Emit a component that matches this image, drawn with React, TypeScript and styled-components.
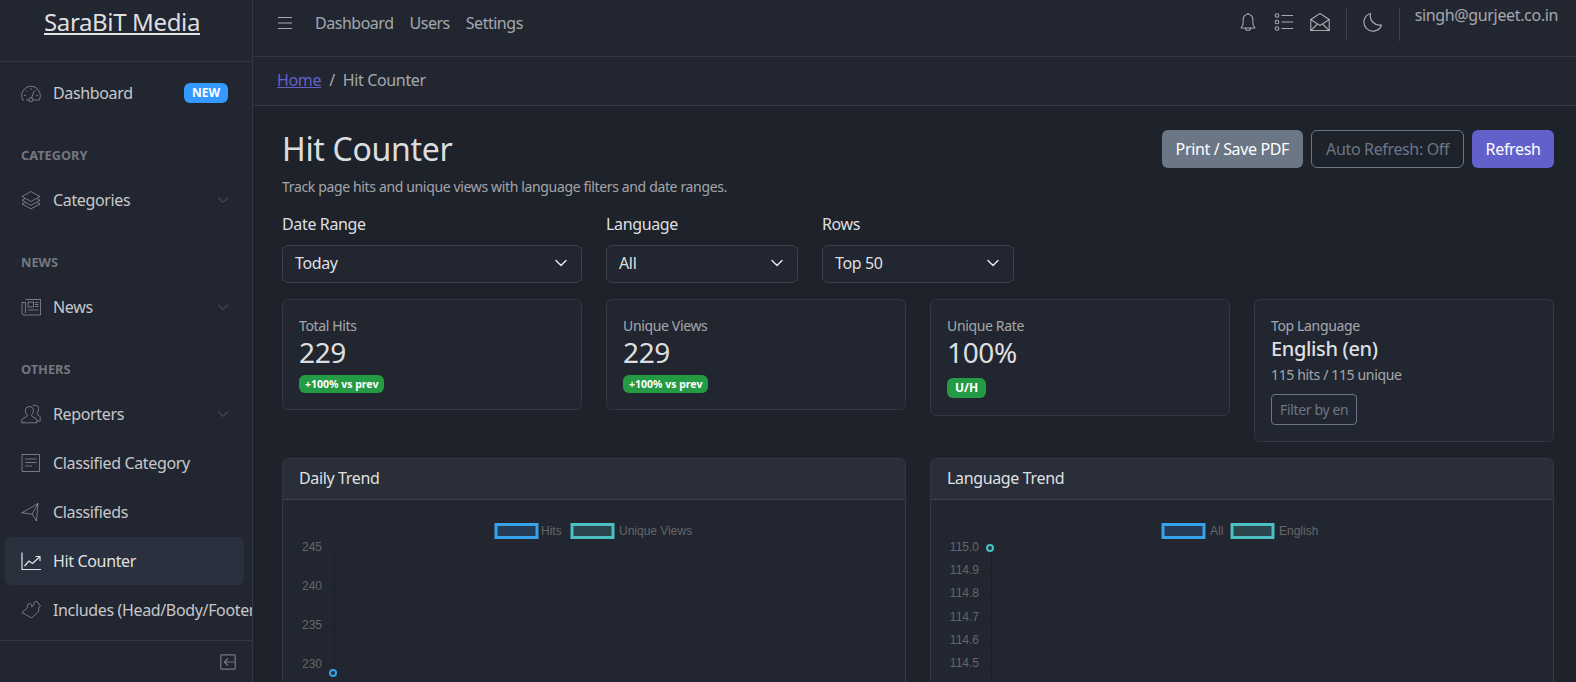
import styled, { createGlobalStyle } from 'styled-components';

const GlobalStyle = createGlobalStyle`
  html, body {
    margin: 0;
    height: 100%;
    overflow: hidden;
    background: #1d222b;
  }
  * { box-sizing: border-box; }
  body {
    font-family: "Noto Sans", sans-serif;
    font-size: 16px;
    line-height: 1.5;
    letter-spacing: -0.022em;
    color: rgba(255, 255, 255, 0.87);
  }
`;

const Icon = ({ children, size = 20 }: { children: React.ReactNode; size?: number }) => (
  <svg width={size} height={size} viewBox="0 0 20 20" fill="none" stroke="currentColor" strokeWidth="1" strokeLinejoin="round">
    {children}
  </svg>
);

const Speedometer = () => (
  <Icon>
    <path d="M3 17H1.800C1 15.500 .7 14 .7 12.500a9.300 9.300 0 0 1 18.600 0c0 1.500-.3 3-1.100 4.500H12" />
    <path d="M8 17H5" />
    <circle cx="10" cy="16.800" r="2" />
    <path d="M10.600 14.900l2.400-6.900M3 12.500h1.800M15.200 12.500H17M10 5v1.800M4.800 7.300l1.200 1.200M15.200 7.300L14 8.500" />
  </Icon>
);
const Layers = () => (
  <Icon>
    <path d="M10 1.500L1 6.500l9 5 9-5z" />
    <path d="M3.800 8.800L1 10.300l9 5 9-5-2.800-1.500" />
    <path d="M3.800 12.600L1 14l9 4.800L19 14l-2.800-1.400" />
  </Icon>
);
const Newspaper = () => (
  <Icon>
    <path d="M4.500 2.500h15v15.500H3a2 2 0 0 1-2-2V5.500h3.500V16" />
    <rect x="7" y="5" width="5.500" height="5" />
    <path d="M14 5.500h3.500M14 7.500h3.500M14 9.500h3.500M7 13h10.500" />
  </Icon>
);
const People = () => (
  <Icon>
    <path d="M.8 18.800v-2.800c0-1.600 3.800-2.600 5-3.700 .6-.8 .2-1.600-.6-2.600C4 8 4 4.800 5.600 3.500c1.500-1.200 4-1.200 5.500 0 1.600 1.300 1.600 4.500 .4 6.200-.8 1-1.200 1.800-.6 2.600 1.200 1.100 5 2.100 5 3.700v2.800z" />
    <path d="M11.500 1.800c1.500-1 3.600-.9 5 .2 1.500 1.300 1.400 4.300 .3 6-.8 1-1 1.800-.4 2.500 .8 .8 2.800 1.400 2.800 3v3.500h-3" />
  </Icon>
);
const Notes = () => (
  <Icon>
    <rect x="1" y="1.500" width="17.500" height="17" />
    <path d="M4 6h11.500M4 9.500h11.500M4 13h7" strokeWidth="1.100" />
  </Icon>
);
const Send = () => (
  <Icon>
    <path d="M17 1.500L.8 10.800l10.400 1.400 4.300 6.800z" />
    <path d="M17 1.500l-5.800 10.700" />
  </Icon>
);
const ChartLine = () => (
  <Icon>
    <path d="M1 1.500V18.500h19" strokeWidth="1.200" />
    <path d="M3.500 15l4.500-5 3.500 2.500L18.500 6" strokeWidth="1.200" />
    <path d="M14.500 5.500h4.500V10" strokeWidth="1.200" />
  </Icon>
);
const Puzzle = () => (
  <Icon>
    <path d="M1 12.500l5.500-5c-.7-1.500-.2-3.500 1.800-3.800 1.700-.2 3 1.300 2.400 3l2.300-2c-.6-1.600 .4-3.200 2-3.200 1.800 0 2.500 1.300 2.500 2.500 1.200 .3 2 1.500 1.500 2.800-.3 .8-1 1.200-1.700 1.400 .8 1.500 .6 3-.6 4.200l-5.200 4.800c-.8 .7-1.700 .7-2.400 0z" />
  </Icon>
);
const Bell = () => (
  <Icon>
    <path d="M4 14.500c.8-1 1.200-2 1.200-4V7a4.800 4.800 0 0 1 9.600 0v3.500c0 2 .4 3 1.200 4 .5 .6 .8 1 .8 1.500H3.200c0-.5 .3-.9 .8-1.500z" strokeWidth="1.100" />
    <path d="M7.500 16a2.500 2.500 0 0 0 5 0" strokeWidth="1.100" />
    <path d="M10 2V.8" strokeWidth="1.100" />
  </Icon>
);
const ListRich = () => (
  <Icon>
    <circle cx="3" cy="3.500" r="1.800" strokeWidth="1.100" />
    <circle cx="3" cy="10" r="1.800" strokeWidth="1.100" />
    <circle cx="3" cy="16.500" r="1.800" strokeWidth="1.100" />
    <path d="M7.500 3.500h11.500M7.500 10h11.500M7.500 16.500h11.500" strokeWidth="1.200" />
  </Icon>
);
const EnvelopeOpen = () => (
  <Icon>
    <path d="M.8 7.500L10 1.500l9.200 6v11H.8z" strokeWidth="1.100" />
    <path d="M.8 7.500L10 13.500l9.200-6M.8 18.500l6.700-6.500M19.200 18.500l-6.700-6.500" strokeWidth="1.100" />
  </Icon>
);
const Moon = () => (
  <Icon>
    <path d="M7.500 1.500A9 9 0 1 0 18.500 13 9.500 9.500 0 0 1 7.500 1.500z" strokeWidth="1.200" />
  </Icon>
);
const Chevron = () => (
  <Icon size={12}>
    <path d="M2 6l8 8 8-8" strokeWidth="1.400" />
  </Icon>
);
const Toggler = () => (
  <Icon size={16}>
    <rect x="1" y="1" width="18" height="18" rx="1" strokeWidth="1.500" />
    <path d="M18 10H6M10 5.500L5.500 10l4.500 4.500" strokeWidth="1.500" />
  </Icon>
);
const Hamburger = () => (
  <svg width="16" height="14" viewBox="0 0 16 14" fill="none" stroke="currentColor" strokeWidth="1.100">
    <path d="M1 1.500h14M1 7h14M1 12.500h14" />
  </svg>
);
const SelectArrow = () => (
  <svg width="16" height="16" viewBox="0 0 16 16" fill="none" stroke="currentColor" strokeWidth="1.500" strokeLinecap="round" strokeLinejoin="round">
    <path d="M3 5.500l5 5 5-5" />
  </svg>
);

const Shell = styled.div`
  display: flex;
  height: 100vh;
  overflow: hidden;
`;

const Sidebar = styled.aside`
  flex: 0 0 253px;
  display: flex;
  flex-direction: column;
  background: #212631;
  border-right: 1px solid #323743;
  overflow: hidden;
`;

const Brand = styled.div`
  flex: 0 0 62px;
  padding-right: 8px;
  border-bottom: 1px solid #323743;
  text-align: center;
`;

const BrandLink = styled.a`
  font-size: 24px;
  line-height: 43px;
  color: rgba(255, 255, 255, 0.87);
  text-decoration: underline;
`;

const SideNav = styled.nav`
  flex: 1;
  padding: 7px 8px 0 5px;
  overflow: hidden;
`;

const NavTitle = styled.div`
  margin-top: 16px;
  padding: 13px 16px 11px;
  font-size: 12.800px;
  font-weight: 700;
  line-height: 19px;
  letter-spacing: normal;
  color: rgba(255, 255, 255, 0.38);
  text-transform: uppercase;
`;

const NavItem = styled.a<{ $active?: boolean }>`
  display: flex;
  align-items: center;
  height: 48px;
  margin-bottom: 1px;
  padding: 0 16px;
  border-radius: 6px;
  white-space: nowrap;
  background: ${(p) => (p.$active ? '#2a303d' : 'transparent')};
  color: ${(p) => (p.$active ? 'rgba(255, 255, 255, 0.87)' : 'rgba(255, 255, 255, 0.75)')};
`;

const NavIcon = styled.span<{ $active?: boolean }>`
  flex: 0 0 32px;
  display: flex;
  color: ${(p) => (p.$active ? 'rgba(255, 255, 255, 0.87)' : 'rgba(255, 255, 255, 0.38)')};
`;

const NavBadge = styled.span`
  margin-left: auto;
  padding: 0 8px;
  height: 20px;
  border-radius: 6px;
  background: #3399ff;
  color: #fff;
  font-size: 12px;
  font-weight: 700;
  line-height: 20px;
  letter-spacing: normal;
`;

const NavChevron = styled.span`
  margin-left: auto;
  margin-right: -1px;
  display: flex;
  color: rgba(255, 255, 255, 0.3);
`;

const SideFooter = styled.div`
  flex: 0 0 42px;
  display: flex;
  align-items: center;
  justify-content: flex-end;
  padding-right: 16px;
  border-top: 1px solid #323743;
  color: rgba(255, 255, 255, 0.38);
`;

const Main = styled.main`
  flex: 1;
  min-width: 0;
  display: flex;
  flex-direction: column;
`;

const TopBarWrap = styled.div`
  background: #212631;
`;

const TopBar = styled.header`
  height: 56px;
  display: flex;
  align-items: flex-start;
`;

const TopLeft = styled.div`
  display: flex;
  align-items: center;
  height: 46px;
  padding-left: 24px;
  color: rgba(255, 255, 255, 0.6);
`;

const TopLink = styled.a`
  margin-right: 16px;
  letter-spacing: -0.03em;
`;

const Burger = styled.span`
  display: flex;
  margin-right: 22px;
`;

const TopRight = styled.div`
  margin-left: auto;
  display: flex;
  align-items: flex-start;
  padding-right: 18px;
  color: rgba(255, 255, 255, 0.6);
`;

const TopIcon = styled.span`
  display: flex;
  width: 36px;
  height: 44px;
  align-items: center;
  justify-content: center;
`;

const VRule = styled.span`
  width: 1px;
  height: 33px;
  margin: 8px 8px 0;
  background: #3c414c;
`;

const Email = styled.span`
  padding: 3px 0 0 7px;
`;

const HRule = styled.div`
  height: 1px;
  background: #323743;
`;

const Crumbs = styled.div`
  display: flex;
  align-items: center;
  height: 48px;
  padding: 0 0 2px 24px;
  color: rgba(255, 255, 255, 0.6);
`;

const CrumbLink = styled.a`
  color: #6261cc;
  text-decoration: underline;
`;

const CrumbSep = styled.span`
  margin: 0 8px;
`;

const Page = styled.div`
  padding: 24px 22px 0 29px;
`;

const TitleRow = styled.div`
  display: flex;
  justify-content: space-between;
  align-items: flex-start;
`;

const PageTitle = styled.h1`
  margin: 0;
  font-size: 32px;
  font-weight: 400;
  line-height: 38px;
  letter-spacing: -0.01em;
`;

const Subtitle = styled.p`
  margin: 8px 0 0;
  font-size: 14px;
  line-height: 21px;
  color: rgba(255, 255, 255, 0.6);
`;

const Actions = styled.div`
  display: flex;
  gap: 8px;
`;

const Button = styled.button<{ $variant: 'secondary' | 'outline' | 'primary' }>`
  height: 38px;
  padding: 0 ${(p) => (p.$variant === 'outline' ? '14px' : p.$variant === 'primary' ? '12.500px' : '13px')} 1px;
  border-radius: 6px;
  font: inherit;
  letter-spacing: inherit;
  border: 1px solid ${(p) => (p.$variant === 'outline' ? '#6b7785' : 'transparent')};
  background: ${(p) => (p.$variant === 'secondary' ? '#6b7785' : p.$variant === 'primary' ? '#6261cc' : 'transparent')};
  color: ${(p) => (p.$variant === 'outline' ? '#6b7785' : '#fff')};
`;

const Filters = styled.div`
  display: flex;
  gap: 24px;
  margin-top: 15px;
`;

const Field = styled.div<{ $width: number }>`
  width: ${(p) => p.$width}px;
`;

const FieldLabel = styled.div`
  margin-bottom: 9px;
`;

const Select = styled.div`
  display: flex;
  align-items: center;
  justify-content: space-between;
  height: 38px;
  padding: 0 12px 2px;
  border: 1px solid #3c414c;
  border-radius: 6px;
  background: #212631;
`;

const StatsRow = styled.div`
  display: grid;
  grid-template-columns: repeat(4, 1fr);
  gap: 24px;
  align-items: start;
  margin-top: 16px;
`;

const StatCard = styled.div`
  padding: 15px 16px 16px;
  border: 1px solid #323743;
  border-radius: 6px;
  background: #212631;
`;

const StatLabel = styled.div`
  font-size: 14px;
  line-height: 21px;
  color: rgba(255, 255, 255, 0.6);
`;

const StatValue = styled.div`
  font-size: 28px;
  line-height: 33px;
`;

const StatName = styled.div`
  font-size: 20px;
  font-weight: 500;
  line-height: 24px;
  margin-top: 1px;
`;

const StatNote = styled.div`
  margin-top: 3px;
  font-size: 14px;
  line-height: 21px;
  color: rgba(255, 255, 255, 0.6);
`;

const Pill = styled.span<{ $big?: boolean }>`
  display: block;
  width: fit-content;
  margin: ${(p) => (p.$big ? '9px 0 1px' : '6px 0 0')};
  padding: ${(p) => (p.$big ? '0 8px' : '0 6px')};
  height: ${(p) => (p.$big ? '20px' : '18px')};
  border-radius: 6px;
  background: #249a45;
  color: #fff;
  font-size: ${(p) => (p.$big ? '12px' : '10.500px')};
  font-weight: 700;
  line-height: ${(p) => (p.$big ? '20px' : '18px')};
  letter-spacing: normal;
`;

const SmallButton = styled.button`
  display: block;
  height: 31px;
  margin-top: 9px;
  padding: 0 8px;
  border: 1px solid #6b7785;
  border-radius: 4px;
  background: transparent;
  color: #6b7785;
  font: inherit;
  font-size: 14px;
  letter-spacing: inherit;
`;

const ChartsRow = styled.div`
  display: grid;
  grid-template-columns: repeat(2, 1fr);
  gap: 24px;
  margin-top: 16px;
`;

const ChartCard = styled.section`
  height: 400px;
  border: 1px solid #323743;
  border-radius: 6px;
  background: #212631;
`;

const ChartHead = styled.div`
  height: 41px;
  padding: 0 16px 2px;
  display: flex;
  align-items: center;
  border-bottom: 1px solid #3c414c;
  background: #2a2e39;
  border-radius: 6px 6px 0 0;
`;

const ChartSvg = styled.svg`
  display: block;
  letter-spacing: normal;
`;

const AXIS_FONT = '"Liberation Sans", Arial, sans-serif';

interface ChartProps {
  axisX: number;
  labelX: number;
  ticks: { label: string; y: number }[];
  right: number;
  legend: { label: string; boxX: number; textX: number; color: string; fill: string }[];
  point: { x: number; y: number; color: string };
}

// drawn like the chart.js canvas, coordinates relative to the card body
const TrendChart = ({ axisX, labelX, ticks, right, legend, point }: ChartProps) => (
  <ChartSvg width="622" height="358" viewBox="0 0 622 358">
    {ticks.map((t) => (
      <g key={t.label}>
        <path d={`M${axisX - 10} ${t.y}.5H${right}`} stroke="#1e232c" fill="none" />
        <text x={labelX} y={t.y + 3} textAnchor="end" fontFamily={AXIS_FONT} fontSize="12" fill="#666">{t.label}</text>
      </g>
    ))}
    <path d={`M${axisX}.5 ${ticks[0].y}V358`} stroke="#1b1f28" fill="none" />
    {legend.map((l) => (
      <g key={l.label}>
        <rect x={l.boxX} y="24.500" width="41" height="13" fill={l.fill} stroke={l.color} strokeWidth="3" />
        <text x={l.textX} y="35" fontFamily={AXIS_FONT} fontSize="12" fill="#666">{l.label}</text>
      </g>
    ))}
    <circle cx={point.x} cy={point.y} r="3" fill="#22303f" stroke={point.color} strokeWidth="2" />
  </ChartSvg>
);

const BLUE = '#36a2eb';
const BLUE_FILL = '#263b55';
const TEAL = '#4bc0c0';
const TEAL_FILL = '#2c444c';

const App = () => (
  <>
    <GlobalStyle />
    <Shell>
      <Sidebar>
        <Brand><BrandLink>SaraBiT Media</BrandLink></Brand>
        <SideNav>
          <NavItem><NavIcon><Speedometer /></NavIcon>Dashboard<NavBadge>NEW</NavBadge></NavItem>
          <NavTitle>Category</NavTitle>
          <NavItem><NavIcon><Layers /></NavIcon>Categories<NavChevron><Chevron /></NavChevron></NavItem>
          <NavTitle>News</NavTitle>
          <NavItem><NavIcon><Newspaper /></NavIcon>News<NavChevron><Chevron /></NavChevron></NavItem>
          <NavTitle>Others</NavTitle>
          <NavItem><NavIcon><People /></NavIcon>Reporters<NavChevron><Chevron /></NavChevron></NavItem>
          <NavItem><NavIcon><Notes /></NavIcon>Classified Category</NavItem>
          <NavItem><NavIcon><Send /></NavIcon>Classifieds</NavItem>
          <NavItem $active><NavIcon $active><ChartLine /></NavIcon>Hit Counter</NavItem>
          <NavItem><NavIcon><Puzzle /></NavIcon>Includes (Head/Body/Footer)</NavItem>
        </SideNav>
        <SideFooter><Toggler /></SideFooter>
      </Sidebar>
      <Main>
        <TopBarWrap>
          <TopBar>
            <TopLeft>
              <Burger><Hamburger /></Burger>
              <TopLink>Dashboard</TopLink>
              <TopLink>Users</TopLink>
              <TopLink>Settings</TopLink>
            </TopLeft>
            <TopRight>
              <TopIcon><Bell /></TopIcon>
              <TopIcon><ListRich /></TopIcon>
              <TopIcon><EnvelopeOpen /></TopIcon>
              <VRule />
              <TopIcon><Moon /></TopIcon>
              <VRule />
              <Email>singh@gurjeet.co.in</Email>
            </TopRight>
          </TopBar>
          <HRule />
          <Crumbs>
            <CrumbLink>Home</CrumbLink>
            <CrumbSep>/</CrumbSep>
            <span>Hit Counter</span>
          </Crumbs>
          <HRule />
        </TopBarWrap>
        <Page>
          <TitleRow>
            <div>
              <PageTitle>Hit Counter</PageTitle>
              <Subtitle>Track page hits and unique views with language filters and date ranges.</Subtitle>
            </div>
            <Actions>
              <Button $variant="secondary">Print / Save PDF</Button>
              <Button $variant="outline">Auto Refresh: Off</Button>
              <Button $variant="primary">Refresh</Button>
            </Actions>
          </TitleRow>
          <Filters>
            <Field $width={300}>
              <FieldLabel>Date Range</FieldLabel>
              <Select>Today<SelectArrow /></Select>
            </Field>
            <Field $width={192}>
              <FieldLabel>Language</FieldLabel>
              <Select>All<SelectArrow /></Select>
            </Field>
            <Field $width={192}>
              <FieldLabel>Rows</FieldLabel>
              <Select>Top 50<SelectArrow /></Select>
            </Field>
          </Filters>
          <StatsRow>
            <StatCard>
              <StatLabel>Total Hits</StatLabel>
              <StatValue>229</StatValue>
              <Pill>+100% vs prev</Pill>
            </StatCard>
            <StatCard>
              <StatLabel>Unique Views</StatLabel>
              <StatValue>229</StatValue>
              <Pill>+100% vs prev</Pill>
            </StatCard>
            <StatCard>
              <StatLabel>Unique Rate</StatLabel>
              <StatValue>100%</StatValue>
              <Pill $big>U/H</Pill>
            </StatCard>
            <StatCard>
              <StatLabel>Top Language</StatLabel>
              <StatName>English (en)</StatName>
              <StatNote>115 hits / 115 unique</StatNote>
              <SmallButton>Filter by en</SmallButton>
            </StatCard>
          </StatsRow>
          <ChartsRow>
            <ChartCard>
              <ChartHead>Daily Trend</ChartHead>
              <TrendChart
                axisX={51}
                labelX={39}
                right={601}
                ticks={[
                  { label: '245', y: 48 },
                  { label: '240', y: 87 },
                  { label: '235', y: 126 },
                  { label: '230', y: 165 },
                  { label: '225', y: 204 },
                ]}
                legend={[
                  { label: 'Hits', boxX: 213, textX: 258, color: BLUE, fill: BLUE_FILL },
                  { label: 'Unique Views', boxX: 289, textX: 336, color: TEAL, fill: TEAL_FILL },
                ]}
                point={{ x: 50, y: 173, color: BLUE }}
              />
            </ChartCard>
            <ChartCard>
              <ChartHead>Language Trend</ChartHead>
              <TrendChart
                axisX={60}
                labelX={48}
                right={598}
                ticks={[
                  { label: '115.0', y: 48 },
                  { label: '114.9', y: 71 },
                  { label: '114.8', y: 94 },
                  { label: '114.7', y: 118 },
                  { label: '114.6', y: 141 },
                  { label: '114.5', y: 164 },
                  { label: '114.4', y: 188 },
                ]}
                legend={[
                  { label: 'All', boxX: 232, textX: 279, color: BLUE, fill: BLUE_FILL },
                  { label: 'English', boxX: 301, textX: 348, color: TEAL, fill: TEAL_FILL },
                ]}
                point={{ x: 59, y: 48, color: TEAL }}
              />
            </ChartCard>
          </ChartsRow>
        </Page>
      </Main>
    </Shell>
  </>
);

export default App;
